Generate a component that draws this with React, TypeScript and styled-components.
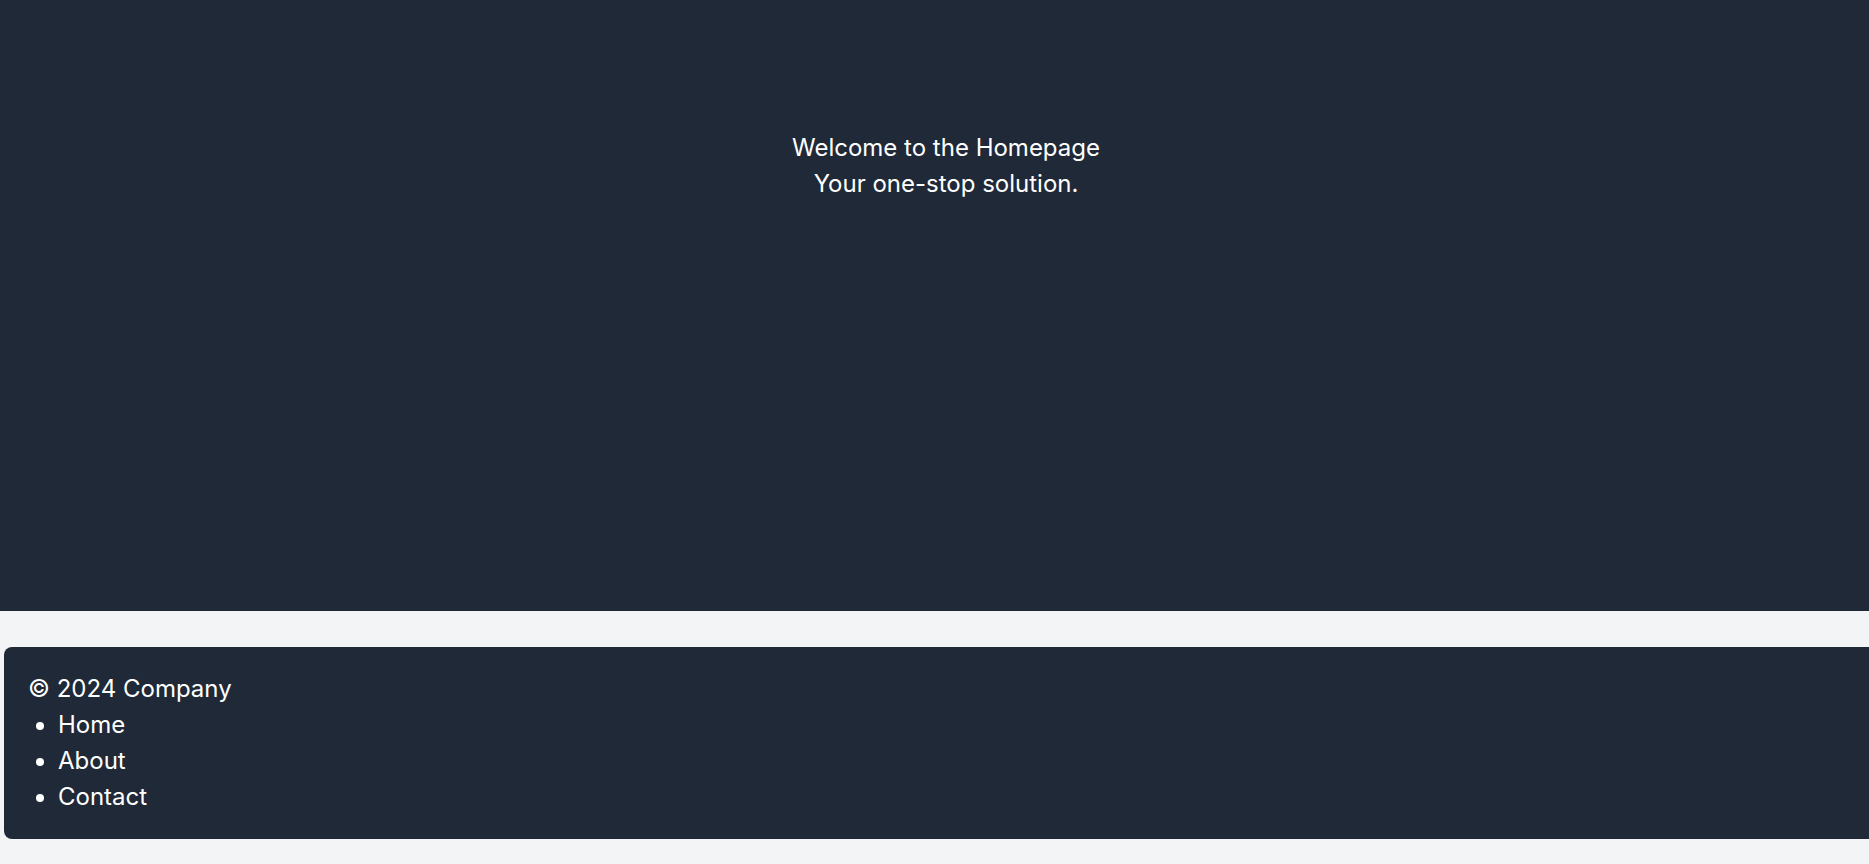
import React from "react";
import styled, { createGlobalStyle } from "styled-components";

const GlobalStyle = createGlobalStyle`
  html, body {
    margin: 0;
    padding: 0;
    overflow-x: hidden;
    background: #f3f4f6;
    font-family: Inter, "Noto Sans", sans-serif;
  }
  * { box-sizing: border-box; }
`;

const Page = styled.div`
  display: flex;
  flex-direction: column;
  align-items: flex-start;
  min-height: 864px;
  overflow: hidden;
  background: #f3f4f6;
`;

const Hero = styled.section`
  align-self: stretch;
  height: 611px;
  background: #1f2937;
  color: #ffffff;
  padding: 130px 0 0 23px;
  text-align: center;
  font-size: 24px;
  line-height: 36px;
`;

const HeroLine = styled.p`
  margin: 0;
`;

const Footer = styled.footer`
  flex-shrink: 0;
  width: calc(100% + 16px);
  margin: 36px 0 25px 4px;
  padding: 24px;
  background: #1f2937;
  color: #ffffff;
  border-radius: 8px;
  font-size: 24px;
  line-height: 36px;
`;

const Copy = styled.p`
  margin: 0;
`;

const NavList = styled.ul`
  margin: 0;
  padding-left: 30px;
  list-style: disc;
`;

const NavItem = styled.li`
  margin: 0;
`;

export default function App() {
  return (
    <Page>
      <GlobalStyle />
      <Hero>
        <HeroLine>Welcome to the Homepage</HeroLine>
        <HeroLine>Your one-stop solution.</HeroLine>
      </Hero>
      <Footer>
        <Copy>© 2024 Company</Copy>
        <NavList>
          <NavItem>Home</NavItem>
          <NavItem>About</NavItem>
          <NavItem>Contact</NavItem>
        </NavList>
      </Footer>
    </Page>
  );
}
